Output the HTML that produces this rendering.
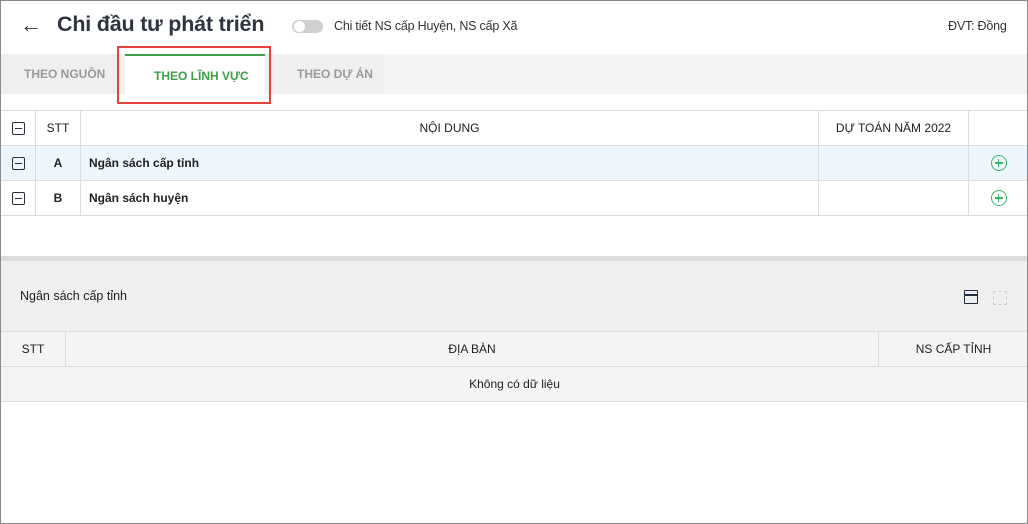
<!DOCTYPE html>
<html><head><meta charset="utf-8"><style>
*{box-sizing:border-box;margin:0;padding:0}
body{width:1028px;height:524px;overflow:hidden;font-family:"Liberation Sans",sans-serif;color:#212121;background:#fff}
.frame{position:absolute;left:0;top:0;width:1028px;height:524px;border:1px solid #8a8a8a}
.abs{position:absolute}
.t{font-size:12.5px}
table{border-collapse:collapse;position:absolute;table-layout:fixed}
td{border:1px solid #dcdcdc;font-size:12px;height:35px}
.cb{display:inline-block;width:13px;height:13px;border:1.5px solid #2b2f3a;border-radius:2px;position:relative;vertical-align:middle}
.cb:after{content:"";position:absolute;left:2px;right:2px;top:4.5px;height:1.5px;background:#2b2f3a}
.plus{display:inline-block;width:16px;height:16px;border:1.5px solid #3bb56a;border-radius:50%;position:relative;vertical-align:middle}
.plus:before{content:"";position:absolute;left:3px;right:3px;top:6px;height:1.5px;background:#3bb56a}
.plus:after{content:"";position:absolute;top:3px;bottom:3px;left:6px;width:1.5px;background:#3bb56a}
</style></head><body>
<div class="abs" style="left:20px;top:12px;font-size:22px;color:#333">←</div>
<div class="abs" style="left:57px;top:12px;font-size:21.5px;font-weight:bold;color:#2e3440;letter-spacing:-0.2px">Chi đầu tư phát triển</div>
<div class="abs" style="left:292px;top:20px;width:31px;height:13px;border-radius:7px;background:#cfcfcf"><div style="position:absolute;left:2px;top:1px;width:11px;height:11px;border-radius:50%;background:#fff"></div></div>
<div class="abs t" style="left:334px;top:19px;color:#333;letter-spacing:-0.2px">Chi tiết NS cấp Huyện, NS cấp Xã</div>
<div class="abs t" style="left:948px;top:19px;color:#333;letter-spacing:-0.2px">ĐVT: Đồng</div>
<div class="abs" style="left:1px;top:54px;width:1026px;height:40px;background:#f4f4f4"></div>
<div class="abs" style="left:1px;top:54px;width:383px;height:40px;background:#efefef"></div>
<div class="abs" style="left:125px;top:54px;width:140px;height:46px;background:#fff;border-top:2px solid #3e9e46"></div>
<div class="abs" style="left:24px;top:67px;font-size:12px;font-weight:bold;color:#9a9a9a">THEO NGUỒN</div>
<div class="abs" style="left:154px;top:69px;font-size:12px;font-weight:bold;color:#3e9e46">THEO LĨNH VỰC</div>
<div class="abs" style="left:297px;top:67px;font-size:12px;font-weight:bold;color:#9a9a9a">THEO DỰ ÁN</div>
<div class="abs" style="left:117px;top:46px;width:154px;height:58px;border:2.5px solid #e4433d"></div>
<table style="left:0;top:110px;width:1028px">
<colgroup><col style="width:35px"><col style="width:45px"><col style="width:738px"><col style="width:150px"><col style="width:60px"></colgroup>
<tr><td style="text-align:center"><span class="cb"></span></td><td style="text-align:center">STT</td><td style="text-align:center">NỘI DUNG</td><td style="text-align:center">DỰ TOÁN NĂM 2022</td><td></td></tr>
<tr style="background:#eef6fd"><td style="text-align:center"><span class="cb"></span></td><td style="text-align:center;font-weight:bold">A</td><td style="padding-left:8px;font-weight:bold">Ngân sách cấp tỉnh</td><td></td><td style="text-align:center"><span class="plus"></span></td></tr>
<tr><td style="text-align:center"><span class="cb"></span></td><td style="text-align:center;font-weight:bold">B</td><td style="padding-left:8px;font-weight:bold">Ngân sách huyện</td><td></td><td style="text-align:center"><span class="plus"></span></td></tr>
</table>
<div class="abs" style="left:1px;top:256px;width:1026px;height:5px;background:#dcdcdc"></div>
<div class="abs" style="left:1px;top:261px;width:1026px;height:70px;background:#efefef"></div>
<div class="abs t" style="left:20px;top:289px">Ngân sách cấp tỉnh</div>
<div class="abs" style="left:964px;top:290px;width:14px;height:14px;border:1.5px solid #1f2a44;border-radius:1px"><div style="position:absolute;left:0;right:0;top:3px;height:1.5px;background:#1f2a44"></div></div>
<div class="abs" style="left:993px;top:291px;width:14px;height:14px;border:1.5px dashed #ccc"></div>
<table style="left:0;top:331px;width:1028px;background:#f4f4f4">
<colgroup><col style="width:65px"><col style="width:813px"><col style="width:150px"></colgroup>
<tr><td style="text-align:center">STT</td><td style="text-align:center">ĐỊA BÀN</td><td style="text-align:center">NS CẤP TỈNH</td></tr>
<tr><td colspan="3" style="text-align:center">Không có dữ liệu</td></tr>
</table>
<div class="frame"></div>
</body></html>
